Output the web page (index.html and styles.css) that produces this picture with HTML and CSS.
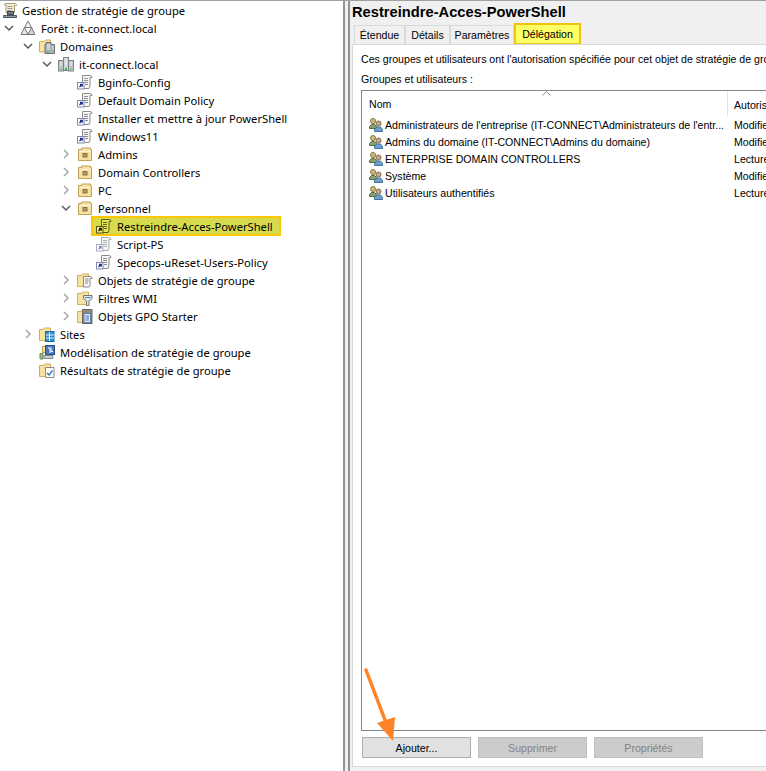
FILE: index.html
```html
<!DOCTYPE html>
<html lang="fr">
<head>
  <meta charset="UTF-8" />
  <title>Gestion de stratégie de groupe</title>
  <link rel="stylesheet" href="styles.css">
</head>
<body>
  <svg class="defs" width="0" height="0">
    <symbol id="i-root" viewBox="0 0 16 16">
      <path d="M3 1.500h10.500l1 1v1h-2v7H4V3H2.500z" fill="#f4eed8" stroke="#a89b74"/>
      <path d="M5.500 4.500h5M5.500 6.500h5M5.500 8.500h4" stroke="#9c9c8c"/>
      <rect x="5.500" y="9.500" width="6" height="3" fill="#6d7a86" stroke="#3e4a56"/>
      <path d="M1.500 13.500h13v2h-13z" fill="#8e9aa4" stroke="#4c5660"/>
    </symbol>
    <symbol id="i-forest" viewBox="0 0 16 16">
      <path d="M8 1l3.500 6.500h-7z" fill="#f6f6f6" stroke="#77787a"/>
      <path d="M4.500 7.500L8 14.500H1z" fill="#e6e6e6" stroke="#77787a"/>
      <path d="M11.500 7.500L15 14.500H8z" fill="#d2d2d2" stroke="#77787a"/>
    </symbol>
    <symbol id="i-domains" viewBox="0 0 16 16">
      <path d="M.5 3.500h5l1-1.500h5v12H.5z" fill="#f8e2a0" stroke="#cfae58"/>
      <path d="M7 4.500h5v2h3.500v9H6v-9h1z" fill="#a9b1b5" stroke="#697277"/>
      <path d="M8 7h3M8 9h3M8 11h3M13 9h1.500M13 11h1.500" stroke="#eef1f2"/>
      <path d="M8 14h1.500" stroke="#3fc13f" stroke-width="1.500"/>
    </symbol>
    <symbol id="i-domain" viewBox="0 0 16 16">
      <rect x="5.500" y="1.500" width="5" height="13" fill="#cfd5d8" stroke="#7c8488"/>
      <rect x=".5" y="4.500" width="5" height="10.500" fill="#bfc6ca" stroke="#7c8488"/>
      <rect x="10.500" y="4.500" width="5" height="10.500" fill="#bfc6ca" stroke="#7c8488"/>
      <path d="M2 7h2M2 9h2M7 4h2M7 6h2M7 8h2M12 7h2M12 9h2" stroke="#f5f6f7"/>
      <path d="M7 13h2" stroke="#35c335" stroke-width="2"/>
      <path d="M2 13h2M12 13h2" stroke="#73d673" stroke-width="1.500"/>
    </symbol>
    <symbol id="i-gpo" viewBox="0 0 16 16">
      <path d="M5.500 1.500h8l1.500 1v1h-2V12l-1 2.500H5.500z" fill="#f6f6f4" stroke="#8c8c8c"/>
      <path d="M7 4.500h4M7 6.500h4M7 8.500h4M8 10.500h3" stroke="#8e8e8e"/>
      <rect x=".5" y="8.500" width="6.500" height="6.500" fill="#fff" stroke="#7f8ab0"/>
      <path d="M2.500 13l2.500-2.500M3 10.500h2.200v2.200" fill="none" stroke="#1b2d8f" stroke-width="1.300"/>
    </symbol>
    <symbol id="i-gpo-sel" viewBox="0 0 16 16">
      <path d="M5.500 1.500h8l1.500 1v1h-2V12l-1 2.500H5.500z" fill="#e4e450" stroke="#5c5c20"/>
      <path d="M7 4.500h4M7 6.500h4M7 8.500h4M8 10.500h3" stroke="#63631c"/>
      <rect x=".5" y="8.500" width="6.500" height="6.500" fill="#f0f07a" stroke="#55551a"/>
      <path d="M2.500 13l2.500-2.500M3 10.500h2.200v2.200" fill="none" stroke="#14140a" stroke-width="1.300"/>
    </symbol>
    <symbol id="i-gpo-faded" viewBox="0 0 16 16">
      <path d="M5.500 1.500h8l1.500 1v1h-2V12l-1 2.500H5.500z" fill="#f8f8f7" stroke="#a9a9a9"/>
      <path d="M7 4.500h4M7 6.500h4M7 8.500h4M8 10.500h3" stroke="#b0b0b0"/>
      <rect x=".5" y="8.500" width="6.500" height="6.500" fill="#fff" stroke="#a7aecb"/>
      <path d="M2.500 13l2.500-2.500M3 10.500h2.200v2.200" fill="none" stroke="#7e8ac8" stroke-width="1.300"/>
    </symbol>
    <symbol id="i-ou" viewBox="0 0 16 16">
      <path d="M1.500 3.500h3v-1.500h9v1.500h1v11h-13z" fill="#f7e0a0" stroke="#c0a258"/>
      <path d="M2.500 5.500h11" stroke="#fdf3d4"/>
      <rect x="6" y="7.500" width="4" height="3.500" fill="#b39a60" stroke="#8a7444"/>
    </symbol>
    <symbol id="i-gpos" viewBox="0 0 16 16">
      <path d="M.5 3.500h4l1-1.500h6v12.500H.5z" fill="#f8e2a0" stroke="#cfae58"/>
      <path d="M6.500 4.500h7l1.500 1v1h-2v7l-1 1.500H6.500z" fill="#f6f6f4" stroke="#8c8c8c"/>
      <path d="M8 7h3.500M8 9h3.500M8 11h3" stroke="#888"/>
    </symbol>
    <symbol id="i-wmi" viewBox="0 0 16 16">
      <path d="M.5 3.500h4l1-1.500h6v12.500H.5z" fill="#f8e2a0" stroke="#cfae58"/>
      <path d="M6.500 5.500h8.500v3l-3 2.500v4.500h-2.500V11l-3-2.500z" fill="#e3e5e6" stroke="#6e7478"/>
      <path d="M8 7.500h5.500" stroke="#3c8fd0"/>
    </symbol>
    <symbol id="i-starter" viewBox="0 0 16 16">
      <path d="M.5 3.500h4l1-1.500h6v12.500H.5z" fill="#f8e2a0" stroke="#cfae58"/>
      <rect x="5.500" y="1.500" width="9.500" height="14" fill="#8d8a80" stroke="#6c685d"/>
      <rect x="7" y="5.500" width="6.500" height="9" fill="#dfe7f2" stroke="#5f7fb0"/>
      <path d="M8.500 8h3.500M8.500 10h3.500M8.500 12h3.500" stroke="#4f6ea6"/>
    </symbol>
    <symbol id="i-sites" viewBox="0 0 16 16">
      <path d="M.5 3.500h4l1-1.500h6v12.500H.5z" fill="#f8e2a0" stroke="#cfae58"/>
      <rect x="6.500" y="5.500" width="8.500" height="10" fill="#2f8ed2" stroke="#1c6aa4"/>
      <path d="M7 9h8M7 12h8M10.500 6v9" stroke="#e6f3fb"/>
    </symbol>
    <symbol id="i-model" viewBox="0 0 16 16">
      <path d="M1 9.500h3v5.500H1z" fill="#9cbb7d" stroke="#6b8a52"/>
      <path d="M3.500 2.500h4v6h-4z" fill="#f8e2a0" stroke="#b99a4d"/>
      <rect x="6.500" y="1.500" width="9" height="9" fill="#4a78bb" stroke="#2a4f86"/>
      <path d="M9 4h2v5M12 3.500v4h2" stroke="#fff" fill="none"/>
      <path d="M5 11.500h9v3H5z" fill="#c9ced2" stroke="#858b8f"/>
    </symbol>
    <symbol id="i-results" viewBox="0 0 16 16">
      <path d="M.5 3.500h4l1-1.500h6v12.500H.5z" fill="#f8e2a0" stroke="#cfae58"/>
      <path d="M6.500 5.500h8.500v10H6.500z" fill="#fbfbfb" stroke="#8c8c8c"/>
      <path d="M8 11l2 2 3.500-4.500" fill="none" stroke="#2f74b5" stroke-width="1.300"/>
    </symbol>
    <symbol id="i-users" viewBox="0 0 16 16">
      <circle cx="5" cy="4" r="2.500" fill="#cdbb7c" stroke="#85783f"/>
      <path d="M1.500 11.500v-2l2-2h3l2 2v2z" fill="#8aa070" stroke="#566b44"/>
      <circle cx="10.500" cy="6.500" r="2.500" fill="#c9ab82" stroke="#806848"/>
      <path d="M6.500 14.500v-2l2-2.500h4l2 2.500v2z" fill="#6ba0cc" stroke="#44749c"/>
    </symbol>
    <symbol id="i-open" viewBox="0 0 10 10">
      <path d="M1 3l4 4 4-4" fill="none" stroke="#5a5a5a" stroke-width="1.500"/>
    </symbol>
    <symbol id="i-closed" viewBox="0 0 10 10">
      <path d="M3 1l4 4-4 4" fill="none" stroke="#a6a6a6" stroke-width="1.500"/>
    </symbol>
  </svg>

  <div class="window">
    <nav class="tree">
      <div class="row d0"><svg class="ico"><use href="#i-root"/></svg><span>Gestion de stratégie de groupe</span></div>
      <div class="row d1"><svg class="exp"><use href="#i-open"/></svg><svg class="ico"><use href="#i-forest"/></svg><span>Forêt : it-connect.local</span></div>
      <div class="row d2"><svg class="exp"><use href="#i-open"/></svg><svg class="ico"><use href="#i-domains"/></svg><span>Domaines</span></div>
      <div class="row d3"><svg class="exp"><use href="#i-open"/></svg><svg class="ico"><use href="#i-domain"/></svg><span>it-connect.local</span></div>
      <div class="row d4"><i class="noexp"></i><svg class="ico"><use href="#i-gpo"/></svg><span>Bginfo-Config</span></div>
      <div class="row d4"><i class="noexp"></i><svg class="ico"><use href="#i-gpo"/></svg><span>Default Domain Policy</span></div>
      <div class="row d4"><i class="noexp"></i><svg class="ico"><use href="#i-gpo"/></svg><span>Installer et mettre à jour PowerShell</span></div>
      <div class="row d4"><i class="noexp"></i><svg class="ico"><use href="#i-gpo"/></svg><span>Windows11</span></div>
      <div class="row d4"><svg class="exp"><use href="#i-closed"/></svg><svg class="ico"><use href="#i-ou"/></svg><span>Admins</span></div>
      <div class="row d4"><svg class="exp"><use href="#i-closed"/></svg><svg class="ico"><use href="#i-ou"/></svg><span>Domain Controllers</span></div>
      <div class="row d4"><svg class="exp"><use href="#i-closed"/></svg><svg class="ico"><use href="#i-ou"/></svg><span>PC</span></div>
      <div class="row d4"><svg class="exp"><use href="#i-open"/></svg><svg class="ico"><use href="#i-ou"/></svg><span>Personnel</span></div>
      <div class="row d5">
        <i class="noexp"></i>
        <div class="selected"><svg class="ico"><use href="#i-gpo-sel"/></svg><span>Restreindre-Acces-PowerShell</span></div>
      </div>
      <div class="row d5"><i class="noexp"></i><svg class="ico"><use href="#i-gpo-faded"/></svg><span>Script-PS</span></div>
      <div class="row d5"><i class="noexp"></i><svg class="ico"><use href="#i-gpo"/></svg><span>Specops-uReset-Users-Policy</span></div>
      <div class="row d4"><svg class="exp"><use href="#i-closed"/></svg><svg class="ico"><use href="#i-gpos"/></svg><span>Objets de stratégie de groupe</span></div>
      <div class="row d4"><svg class="exp"><use href="#i-closed"/></svg><svg class="ico"><use href="#i-wmi"/></svg><span>Filtres WMI</span></div>
      <div class="row d4"><svg class="exp"><use href="#i-closed"/></svg><svg class="ico"><use href="#i-starter"/></svg><span>Objets GPO Starter</span></div>
      <div class="row d2"><svg class="exp"><use href="#i-closed"/></svg><svg class="ico"><use href="#i-sites"/></svg><span>Sites</span></div>
      <div class="row d2"><i class="noexp"></i><svg class="ico"><use href="#i-model"/></svg><span>Modélisation de stratégie de groupe</span></div>
      <div class="row d2"><i class="noexp"></i><svg class="ico"><use href="#i-results"/></svg><span>Résultats de stratégie de groupe</span></div>
    </nav>

    <div class="splitter"></div>

    <main class="details">
      <h1>Restreindre-Acces-PowerShell</h1>
      <div class="tabs">
        <div class="tab t-scope">Étendue</div>
        <div class="tab t-details">Détails</div>
        <div class="tab t-settings">Paramètres</div>
        <div class="tab t-active">Délégation</div>
      </div>
      <section class="panel">
        <p class="intro">Ces groupes et utilisateurs ont l'autorisation spécifiée pour cet objet de stratégie de groupe :</p>
        <p class="label">Groupes et utilisateurs :</p>
        <div class="list">
          <div class="list-head">
            <div class="col-name">Nom<svg class="sort" width="9" height="5"><path d="M.5 4.500l4-4 4 4" fill="none" stroke="#8a8a8a"/></svg></div>
            <div class="col-perm">Autorisations</div>
          </div>
          <div class="list-body">
            <div class="item"><div class="col-name"><svg class="ico"><use href="#i-users"/></svg><span>Administrateurs de l'entreprise (IT-CONNECT\Administrateurs de l'entr...</span></div><div class="col-perm">Modifier</div></div>
            <div class="item"><div class="col-name"><svg class="ico"><use href="#i-users"/></svg><span>Admins du domaine (IT-CONNECT\Admins du domaine)</span></div><div class="col-perm">Modifier</div></div>
            <div class="item"><div class="col-name"><svg class="ico"><use href="#i-users"/></svg><span>ENTERPRISE DOMAIN CONTROLLERS</span></div><div class="col-perm">Lecture</div></div>
            <div class="item"><div class="col-name"><svg class="ico"><use href="#i-users"/></svg><span>Système</span></div><div class="col-perm">Modifier</div></div>
            <div class="item"><div class="col-name"><svg class="ico"><use href="#i-users"/></svg><span>Utilisateurs authentifiés</span></div><div class="col-perm">Lecture</div></div>
          </div>
        </div>
        <div class="buttons">
          <button type="button">Ajouter...</button>
          <button type="button" disabled>Supprimer</button>
          <button type="button" disabled>Propriétés</button>
        </div>
      </section>
    </main>
  </div>

  <svg class="arrow" width="40" height="80" viewBox="0 0 40 80">
    <path d="M3 2l19 50" stroke="#ff8327" stroke-width="3.500" stroke-linecap="round" fill="none"/>
    <path d="M14 55l18-6-2 24z" fill="#ff8327"/>
  </svg>
</body>
</html>
```

FILE: styles.css
```css
html, body {
  margin: 0;
  height: 100%;
  overflow: hidden;
}
body {
  position: relative;
  font-family: "Noto Sans", sans-serif;
  font-size: 11.2px;
  color: #000;
  background: #fff;
}
.defs {
  position: absolute;
}
.window {
  display: flex;
  height: 771px;
  border-top: 1px solid #a0a0a0;
  box-sizing: border-box;
}

/* left tree */
.tree {
  width: 343px;
  flex: none;
  background: #fff;
}
.row {
  display: flex;
  align-items: center;
  height: 18px;
  white-space: nowrap;
}
.d0 { padding-left: 2px; }
.d1 { padding-left: 1px; }
.d2 { padding-left: 20px; }
.d3 { padding-left: 39px; }
.d4 { padding-left: 58px; }
.d5 { padding-left: 77px; }
.exp, .noexp {
  flex: none;
  width: 16px;
  height: 10px;
  margin-right: 3px;
  display: block;
}
.ico {
  flex: none;
  width: 16px;
  height: 16px;
}
.row .ico {
  margin-right: 5px;
}
.d0 .ico {
  margin-right: 4px;
}
.selected {
  display: flex;
  align-items: center;
  height: 20px;
  margin-left: -5px;
  padding: 0 6px 0 3px;
  background: #d6da4c;
  border: 2px solid #fbc707;
  box-sizing: border-box;
}

.splitter {
  flex: none;
  width: 3px;
  background: #f0f0f0;
  border-left: 2px solid #8f9296;
  border-right: 2px solid #8f9296;
}

/* right pane */
.details {
  flex: 1;
  min-width: 0;
  background: #f0f0f0;
  padding: 0 0 4px 2px;
  display: flex;
  flex-direction: column;
  font-family: "Liberation Sans", sans-serif;
  font-size: 10.6px;
}
h1 {
  margin: 0;
  height: 22px;
  line-height: 22px;
  font-size: 14.7px;
  font-weight: bold;
}
.tabs {
  display: flex;
  height: 21px;
  padding-left: 2px;
  align-items: flex-end;
}
.tab {
  height: 19px;
  line-height: 19px;
  box-sizing: border-box;
  border: 1px solid #d9d9d9;
  border-bottom: 0;
  text-align: center;
}
.t-scope { width: 51px; }
.t-details { width: 45px; }
.t-settings { width: 64px; }
.t-active {
  width: 67px;
  height: 21px;
  line-height: 19px;
  background: #ffff66;
  border: 2px solid #f0c30e;
  border-bottom: 1px solid #f0c30e;
}
.panel {
  flex: 1;
  min-height: 0;
  background: #fff;
  border: 1px solid #d9d9d9;
  border-right: 0;
  padding: 6px 0 8px 8px;
  display: flex;
  flex-direction: column;
  overflow: hidden;
  white-space: nowrap;
}
.intro, .label {
  margin: 0;
  line-height: 16px;
}
.label {
  margin-top: 4px;
}
.list {
  flex: 1;
  min-height: 0;
  margin-top: 3px;
  margin-right: -100px;
  border: 1px solid #82878f;
}
.list-head {
  display: flex;
  height: 25px;
  align-items: center;
}
.list-head .col-name {
  position: relative;
  padding-left: 7px;
  height: 25px;
  line-height: 27px;
  box-sizing: border-box;
  border-right: 1px solid #e3e3e3;
}
.list-head .col-perm {
  padding-top: 2px;
}
.sort {
  position: absolute;
  left: 180px;
  top: 0;
}
.col-name {
  flex: none;
  width: 366px;
}
.col-perm {
  padding-left: 6px;
}
.item {
  display: flex;
  align-items: center;
  height: 17px;
}
.item .col-name {
  display: flex;
  align-items: center;
  padding-left: 6px;
  box-sizing: border-box;
}
.item .ico {
  margin-right: 1px;
}
.buttons {
  display: flex;
  gap: 7px;
  margin-top: 6px;
  margin-left: 1px;
}
button {
  width: 109px;
  height: 21px;
  padding: 0;
  font: inherit;
  color: #000;
  background: #e1e1e1;
  border: 1px solid #adadad;
}
button:disabled {
  color: #838383;
  background: #cccccc;
  border-color: #bfbfbf;
}

/* annotation drawn over the screenshot */
.arrow {
  position: absolute;
  left: 363px;
  top: 668px;
}
```
